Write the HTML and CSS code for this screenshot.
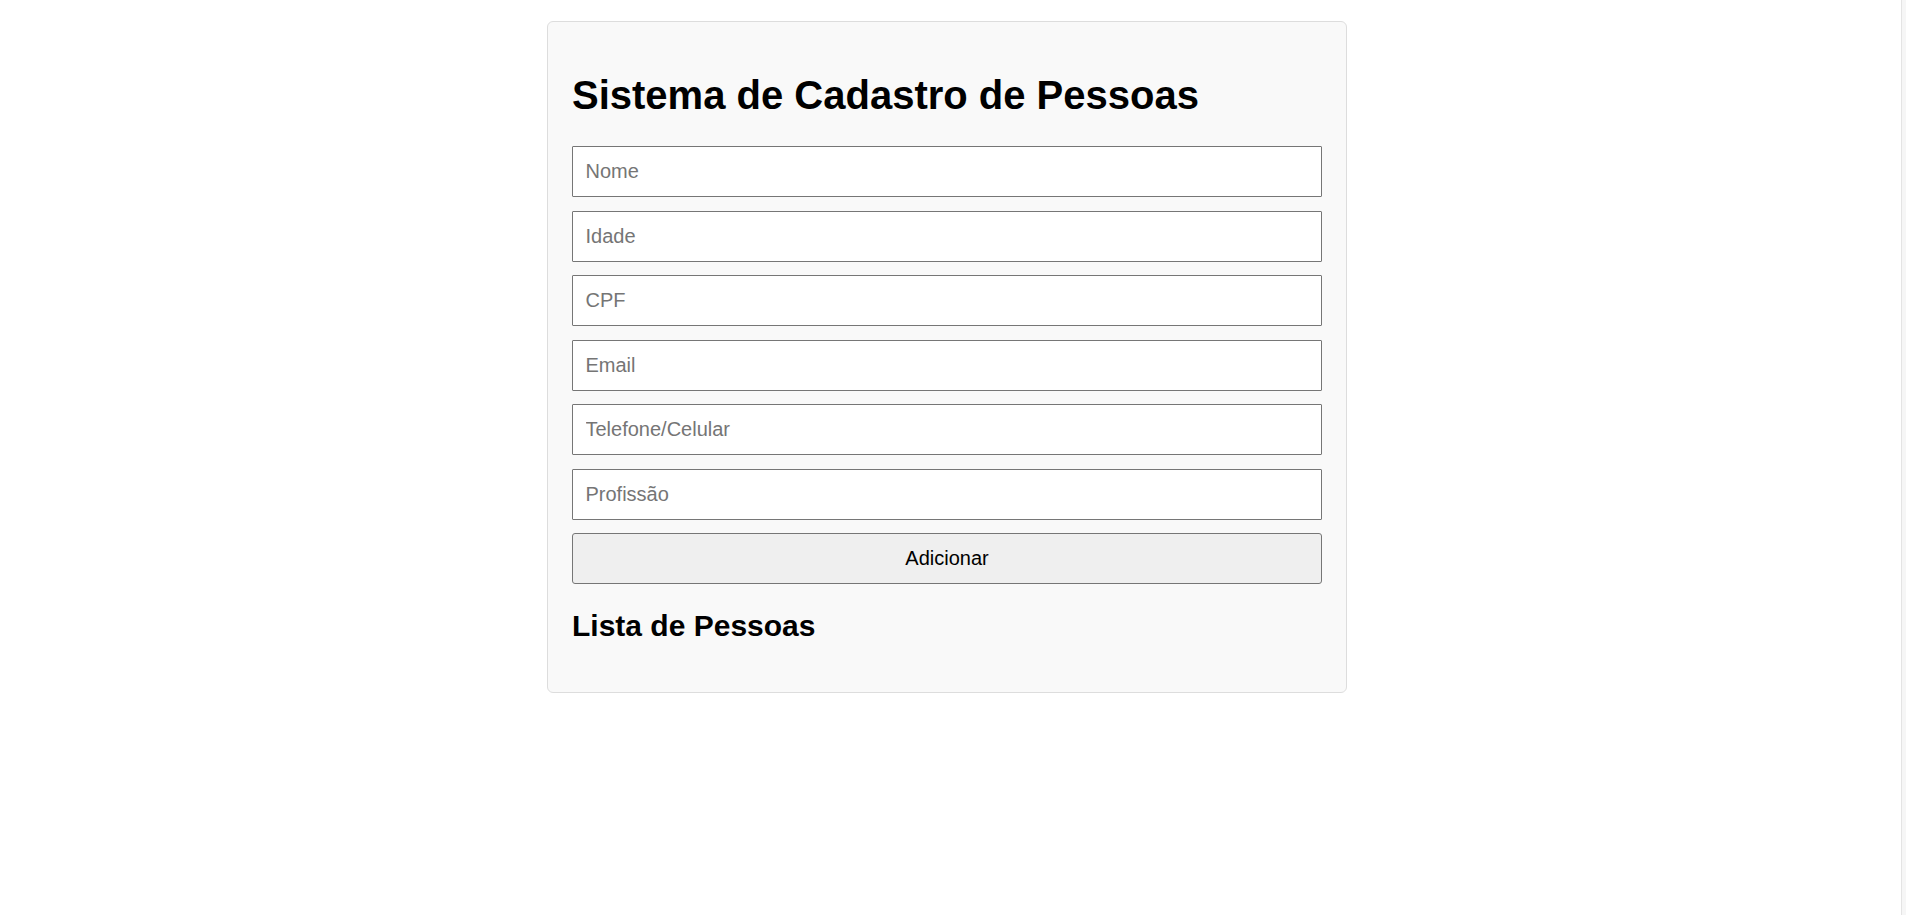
FILE: index.html
```html
<!DOCTYPE html>
<html lang="pt-BR">
<head>
<meta charset="utf-8">
<title>Sistema de Cadastro de Pessoas</title>
<link rel="stylesheet" href="styles.css">
</head>
<body>
<div class="edge"></div>
<main class="container">
  <h1 class="title">Sistema de Cadastro de Pessoas</h1>
  <form class="form">
    <input class="field" type="text" placeholder="Nome">
    <input class="field" type="text" placeholder="Idade">
    <input class="field" type="text" placeholder="CPF">
    <input class="field" type="text" placeholder="Email">
    <input class="field" type="text" placeholder="Telefone/Celular">
    <input class="field" type="text" placeholder="Profissão">
    <button class="btn" type="button">Adicionar</button>
  </form>
  <h2 class="subtitle">Lista de Pessoas</h2>
  <ul class="list"></ul>
</main>
</body>
</html>
```
FILE: styles.css
```css
html, body {
  margin: 0;
  background: #ffffff;
}
body {
  padding: 0 12px 0 0;
  font-family: "Liberation Sans", Arial, sans-serif;
  color: #000;
}
.edge {
  position: fixed;
  top: 0;
  bottom: 0;
  right: 0;
  width: 4px;
  border-left: 1px solid #e4e4e4;
  background: #f6f6f6;
}
.container {
  box-sizing: border-box;
  width: 800px;
  margin: 21px auto 0;
  padding: 50px 24px 49px;
  background: #f9f9f9;
  border: 1px solid #dddddd;
  border-radius: 6px;
}
.title {
  margin: 0 0 28px;
  font-size: 40px;
  line-height: 46px;
  font-weight: bold;
}
.form {
  display: flex;
  flex-direction: column;
  gap: 13.55px;
  margin: 0;
}
.field {
  box-sizing: border-box;
  width: 750px;
  height: 51px;
  margin: 0;
  padding: 0 12.5px;
  font-family: "Liberation Sans", Arial, sans-serif;
  font-size: 20px;
  color: #000;
  background: #ffffff;
  border: 1px solid #767676;
  border-radius: 1px;
  outline: none;
}
.field::placeholder {
  color: #757575;
}
.btn {
  box-sizing: border-box;
  width: 750px;
  height: 51px;
  margin: 0;
  padding: 0;
  font-family: "Liberation Sans", Arial, sans-serif;
  font-size: 20px;
  color: #000;
  background: #efefef;
  border: 1px solid #767676;
  border-radius: 3px;
}
.subtitle {
  margin: 23.8px 0 0;
  font-size: 30px;
  line-height: 35px;
  font-weight: bold;
}
.list {
  margin: 0;
  padding: 0;
  list-style: none;
}
```
